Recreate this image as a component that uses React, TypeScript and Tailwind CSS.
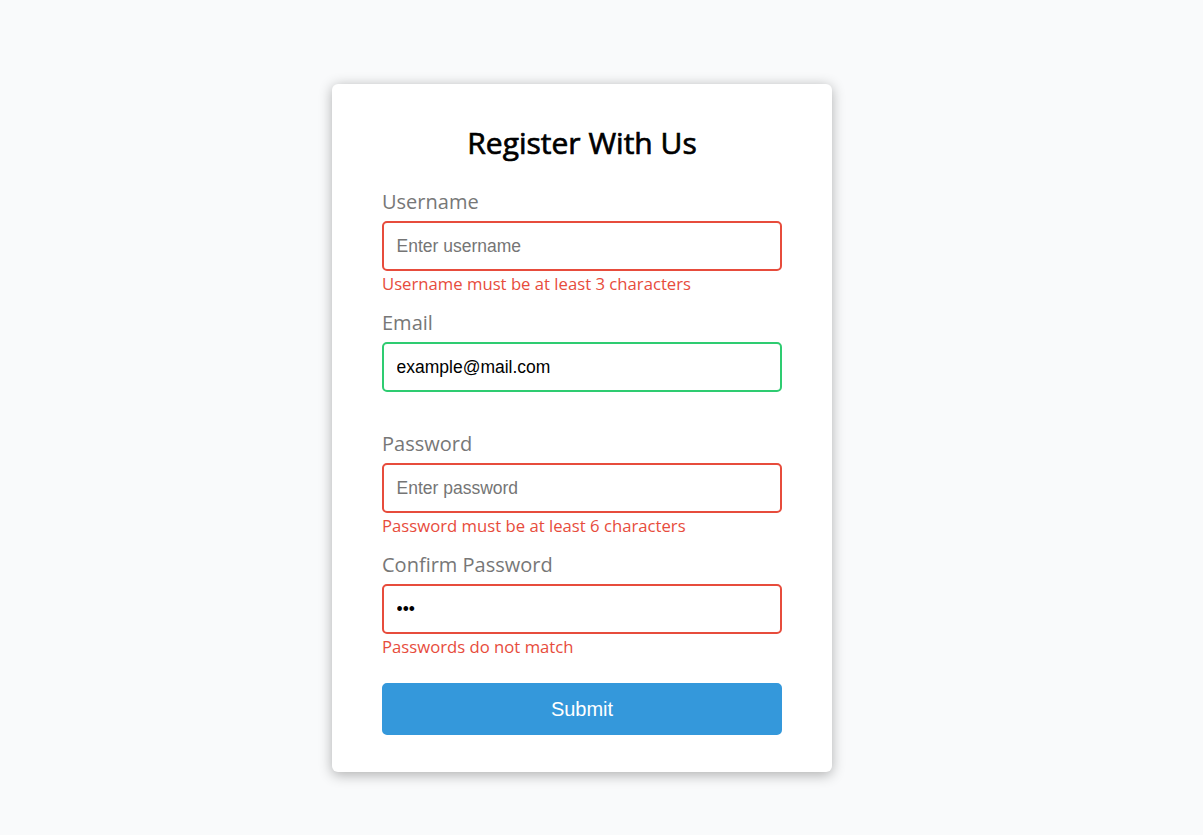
import { useState } from "react"

type Status = "error" | "success"

type Field = {
  id: string
  label: string
  type: string
  placeholder: string
  value: string
  status: Status
  message?: string
}

const fields: Field[] = [
  {
    id: "username",
    label: "Username",
    type: "text",
    placeholder: "Enter username",
    value: "",
    status: "error",
    message: "Username must be at least 3 characters",
  },
  {
    id: "email",
    label: "Email",
    type: "text",
    placeholder: "Enter email",
    value: "example@mail.com",
    status: "success",
  },
  {
    id: "password",
    label: "Password",
    type: "password",
    placeholder: "Enter password",
    value: "",
    status: "error",
    message: "Password must be at least 6 characters",
  },
  {
    id: "password2",
    label: "Confirm Password",
    type: "password",
    placeholder: "Enter password again",
    value: "abc",
    status: "error",
    message: "Passwords do not match",
  },
]

function FormControl({ field }: { field: Field }) {
  const [value, setValue] = useState(field.value)

  return (
    <div className="relative mb-[12.5px] pb-[25px]">
      <label
        htmlFor={field.id}
        className="mb-[6.25px] block text-[20px] leading-[27.25px] text-[#777]"
      >
        {field.label}
      </label>
      <input
        id={field.id}
        type={field.type}
        value={value}
        onChange={(e) => setValue(e.target.value)}
        placeholder={field.placeholder}
        className={
          "block h-[50px] w-full rounded-[5px] border-[2.5px] bg-white px-[12.5px] font-['Liberation_Sans',Arial,sans-serif] text-[17.5px] text-black outline-none placeholder:text-[#757575] " +
          (field.status === "error" ? "border-[#e74c3c]" : "border-[#2ecc71]")
        }
      />
      {field.message && (
        <small className="absolute bottom-0 left-0 text-[16.7px] leading-[22.7px] text-[#e74c3c]">
          {field.message}
        </small>
      )}
    </div>
  )
}

export default function App() {
  return (
    <div className="min-h-screen bg-[#f9fafb] font-['Open_Sans',sans-serif]">
      <div className="pl-[332px] pt-[84px]">
        <div className="w-[500px] rounded-[6px] bg-white shadow-[0_2.5px_12.5px_rgba(0,0,0,0.3)]">
          <form
            className="px-[50px] pt-[37.5px] pb-[37px]"
            onSubmit={(e) => e.preventDefault()}
          >
            <h2 className="mb-[25px] text-center text-[30px] leading-[41px] font-normal text-black [-webkit-text-stroke:0.7px_black]">
              Register With Us
            </h2>
            {fields.map((f) => (
              <FormControl key={f.id} field={f} />
            ))}
            <button
              type="submit"
              className="mt-[24px] block h-[52px] w-full rounded-[5px] border-[2.5px] border-[#3498db] bg-[#3498db] font-['Liberation_Sans',Arial,sans-serif] text-[20px] text-white"
            >
              Submit
            </button>
          </form>
        </div>
      </div>
    </div>
  )
}
